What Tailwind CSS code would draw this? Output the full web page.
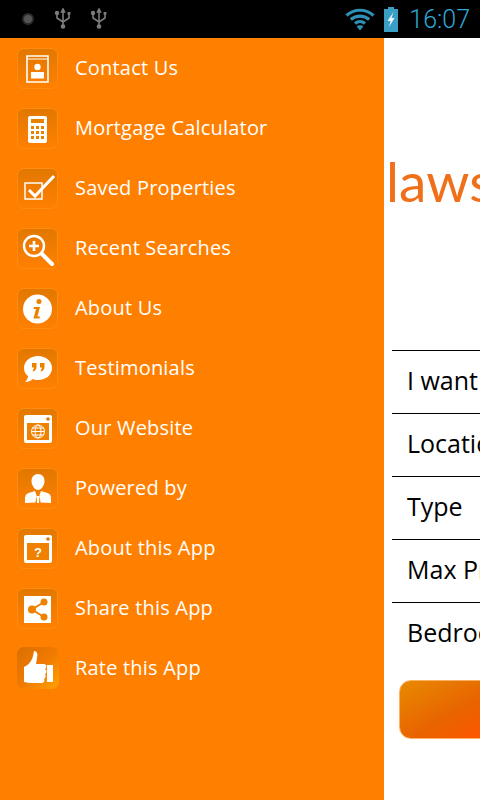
<!DOCTYPE html>
<html lang="en">
<head>
<meta charset="UTF-8">
<meta name="viewport" content="width=device-width, initial-scale=1.0">
<title>Property search</title>
<script src="https://cdn.jsdelivr.net/npm/@tailwindcss/browser@4"></script>
</head>
<body class="w-[480px] h-[800px] overflow-hidden bg-white font-['Open_Sans',sans-serif]">
  <!-- status bar -->
  <div class="h-[38px] bg-black flex items-center">
    <div class="w-[12px] h-[12px] ml-[22px] rounded-full bg-[#555] border-2 border-[#2c2c2c]"></div>
    <svg class="ml-[20px]" width="18" height="22" viewBox="0 0 18 22" fill="none" stroke="#7c7c7c" stroke-width="1.6"><path d="M9 1v17M3 6v4l6 4 6-4V6"/><path d="M9 1 7.5 4h3z" fill="#7c7c7c"/><circle cx="3" cy="5" r="1.4" fill="#7c7c7c"/><rect x="13.6" y="4" width="2.8" height="2.8" fill="#7c7c7c" stroke="none"/><circle cx="9" cy="18.5" r="2.3" fill="#7c7c7c" stroke="none"/></svg>
    <svg class="ml-[18px]" width="18" height="22" viewBox="0 0 18 22" fill="none" stroke="#7c7c7c" stroke-width="1.6"><path d="M9 1v17M3 6v4l6 4 6-4V6"/><path d="M9 1 7.5 4h3z" fill="#7c7c7c"/><circle cx="3" cy="5" r="1.4" fill="#7c7c7c"/><rect x="13.6" y="4" width="2.8" height="2.8" fill="#7c7c7c" stroke="none"/><circle cx="9" cy="18.5" r="2.3" fill="#7c7c7c" stroke="none"/></svg>
    <svg class="ml-auto" width="30" height="24" viewBox="0 0 30 24" fill="none" stroke="#2f8fb5" stroke-width="3.2"><path d="M1.5 8.5C9 1.5 21 1.5 28.5 8.5"/><path d="M5.8 12.5c5.2-4.6 13.200-4.600 18.400 0"/><path d="M10 16.500c3-2.500 7-2.500 10 0"/><path d="M15 23.500l-3.500-4.200c2-1.300 5-1.300 7 0z" fill="#2f8fb5" stroke="none"/></svg>
    <svg class="ml-[8px]" width="16" height="26" viewBox="0 0 16 26"><path d="M5 1h6v2h4v23H1V3h4z" fill="#3a9fc5"/><path d="M10.500 6 4.500 15h3l-1.500 6 5.500-9h-3z" fill="#e8f6fb"/></svg>
    <span class="ml-[10px] mr-[10px] text-[25px] leading-none font-['Roboto',sans-serif] font-light text-[#2ea8dc]">16:07</span>
  </div>

  <div class="flex h-[762px]">
    <!-- drawer -->
    <nav class="w-[384px] shrink-0 bg-[#ff8000] text-white text-[20px] tracking-[0.2px]">
      <a class="h-[60px] flex items-center pl-[17px] gap-[17px]">
        <span class="w-[41px] h-[41px] rounded-[7px] border border-[#ff8c10] bg-gradient-to-b from-[#e27800] to-[#ff8000]">
          <svg width="39" height="39" viewBox="0 0 39 39"><path d="M9 7h21v26H9z" fill="none" stroke="#fff" stroke-width="1.600"/><path d="M10 10h19" stroke="#fff"/><circle cx="19.500" cy="18" r="3.200" fill="#fff"/><rect x="13" y="23" width="13" height="6.500" fill="#fff"/></svg>
        </span>
        <span>Contact Us</span>
      </a>
      <a class="h-[60px] flex items-center pl-[17px] gap-[17px]">
        <span class="w-[41px] h-[41px] rounded-[7px] border border-[#ff8c10] bg-gradient-to-b from-[#e27800] to-[#ff8000]">
          <svg width="39" height="39" viewBox="0 0 39 39"><rect x="10" y="7" width="19" height="27" rx="2" fill="#fff"/><rect x="13" y="10" width="13" height="4" fill="#e88000"/><g fill="#e88000"><rect x="13" y="17" width="3" height="3"/><rect x="18" y="17" width="3" height="3"/><rect x="23" y="17" width="3" height="3"/><rect x="13" y="22" width="3" height="3"/><rect x="18" y="22" width="3" height="3"/><rect x="23" y="22" width="3" height="3"/><rect x="13" y="27" width="3" height="3"/><rect x="18" y="27" width="3" height="3"/><rect x="23" y="27" width="3" height="3"/></g></svg>
        </span>
        <span>Mortgage Calculator</span>
      </a>
      <a class="h-[60px] flex items-center pl-[17px] gap-[17px]">
        <span class="w-[41px] h-[41px] rounded-[7px] border border-[#ff8c10] bg-gradient-to-b from-[#e27800] to-[#ff8000]">
          <svg width="39" height="39" viewBox="0 0 39 39" fill="none" stroke="#fff"><rect x="7" y="14" width="17" height="16" stroke-width="1.500"/><path d="M11 21l6 6L36 7" stroke-width="3"/></svg>
        </span>
        <span>Saved Properties</span>
      </a>
      <a class="h-[60px] flex items-center pl-[17px] gap-[17px]">
        <span class="w-[41px] h-[41px] rounded-[7px] border border-[#ff8c10] bg-gradient-to-b from-[#e27800] to-[#ff8000]">
          <svg width="39" height="39" viewBox="0 0 39 39" fill="none" stroke="#fff"><circle cx="16" cy="17" r="10" stroke-width="2.400"/><path d="M16 12v10M11 17h10" stroke-width="2.600"/><path d="M24 25l10 10" stroke-width="4" stroke-linecap="round"/></svg>
        </span>
        <span>Recent Searches</span>
      </a>
      <a class="h-[60px] flex items-center pl-[17px] gap-[17px]">
        <span class="w-[41px] h-[41px] rounded-[7px] border border-[#ff8c10] bg-gradient-to-b from-[#e27800] to-[#ff8000]">
          <svg width="39" height="39" viewBox="0 0 39 39"><circle cx="19.500" cy="20" r="14.500" fill="#fff"/><circle cx="21" cy="12.500" r="2.500" fill="#ee8000"/><path d="M16 18h6l-2.500 9.500h2.500l-.5 2h-6l2.500-9.500h-2.500z" fill="#ee8000"/></svg>
        </span>
        <span>About Us</span>
      </a>
      <a class="h-[60px] flex items-center pl-[17px] gap-[17px]">
        <span class="w-[41px] h-[41px] rounded-[7px] border border-[#ff8c10] bg-gradient-to-b from-[#e27800] to-[#ff8000]">
          <svg width="39" height="39" viewBox="0 0 39 39"><path d="M20 7c8 0 14 5 14 12s-6 12-14 12c-2 0-3 0-5-1-2 2-5 3-8 3 2-2 3-4 3-6-3-2-4-5-4-8C6 12 12 7 20 7z" fill="#fff"/><path d="M14 14h4.500v3.500c0 2.500-1 4-3 5l-1-1c1-1 1.500-2 1.500-3h-2zM22 14h4.500v3.500c0 2.500-1 4-3 5l-1-1c1-1 1.500-2 1.500-3h-2z" fill="#ee8000"/></svg>
        </span>
        <span>Testimonials</span>
      </a>
      <a class="h-[60px] flex items-center pl-[17px] gap-[17px]">
        <span class="w-[41px] h-[41px] rounded-[7px] border border-[#ff8c10] bg-gradient-to-b from-[#e27800] to-[#ff8000]">
          <svg width="39" height="39" viewBox="0 0 39 39"><rect x="6" y="6" width="28" height="28" rx="2" fill="#fff"/><circle cx="30" cy="10" r="1.800" fill="#e07600"/><rect x="9" y="14" width="22" height="17" fill="#f08000"/><g fill="none" stroke="#fff" stroke-width="1"><circle cx="20" cy="22.500" r="6.500"/><ellipse cx="20" cy="22.500" rx="3" ry="6.500"/><path d="M13.500 22.500h13M14.500 19h11M14.500 26h11"/></g></svg>
        </span>
        <span>Our Website</span>
      </a>
      <a class="h-[60px] flex items-center pl-[17px] gap-[17px]">
        <span class="w-[41px] h-[41px] rounded-[7px] border border-[#ff8c10] bg-gradient-to-b from-[#e27800] to-[#ff8000]">
          <svg width="39" height="39" viewBox="0 0 39 39" fill="#fff"><path d="M20 5c4 0 6.500 3 6.500 7 0 4-3 9-6.500 9s-6.500-5-6.500-9c0-4 2.500-7 6.500-7z"/><path d="M7 34v-5c0-3 2-5 5-5.500l5-1.500 1.500 4-1 7.500zM33 34v-5c0-3-2-5-5-5.500l-5-1.500-1.500 4 1 7.500zM19 34l-.500-7h3l-.500 7z"/></svg>
        </span>
        <span>Powered by</span>
      </a>
      <a class="h-[60px] flex items-center pl-[17px] gap-[17px]">
        <span class="w-[41px] h-[41px] rounded-[7px] border border-[#ff8c10] bg-gradient-to-b from-[#e27800] to-[#ff8000]">
          <svg width="39" height="39" viewBox="0 0 39 39"><rect x="6" y="6" width="28" height="28" rx="2" fill="#fff"/><circle cx="30" cy="10" r="1.800" fill="#e07600"/><rect x="9" y="14" width="22" height="17" fill="#f08000"/><text x="20" y="28" text-anchor="middle" font-family="Liberation Sans" font-weight="700" font-size="13" fill="#fff">?</text></svg>
        </span>
        <span>About this App</span>
      </a>
      <a class="h-[60px] flex items-center pl-[17px] gap-[17px]">
        <span class="w-[41px] h-[41px] rounded-[7px] border border-[#ff8c10] bg-gradient-to-b from-[#e27800] to-[#ff8000]">
          <svg width="39" height="39" viewBox="0 0 39 39"><rect x="6" y="7" width="27" height="27" fill="#fff"/><path d="M26 13 14 20.500 26 28" fill="none" stroke="#f08000" stroke-width="2"/><circle cx="26" cy="13" r="3.500" fill="#f08000"/><circle cx="14" cy="20.500" r="4" fill="#f08000"/><circle cx="26" cy="28" r="3.500" fill="#f08000"/></svg>
        </span>
        <span>Share this App</span>
      </a>
      <a class="h-[60px] flex items-center pl-[17px] gap-[16px]">
        <span class="w-[42px] h-[42px] rounded-[7px] bg-gradient-to-br from-[#d97000] via-[#f07a00] to-[#ffa000]">
          <svg width="42" height="42" viewBox="0 0 42 42" fill="#fff"><path d="M17 4c3 0 4 3 3 7l-1 6h8c3 0 3 4 1 5 2 1 2 4 0 5 1 1 1 4-1 5 1 2 0 4-3 4H13c-3 0-4-1-6-1V20c5-2 8-7 9-11z"/><rect x="30" y="18" width="6" height="17"/></svg>
        </span>
        <span>Rate this App</span>
      </a>
    </nav>

    <!-- main page, cut off by the drawer -->
    <main class="w-[480px] shrink-0 text-black">
      <div class="h-[312px] pt-[107px] pl-[2px] overflow-hidden">
        <span class="block text-[55px] leading-[72px] font-['Lato',sans-serif] text-[#f0701a] whitespace-nowrap">laws</span>
      </div>
      <div class="ml-[8px] border-t border-black h-[63px] flex items-center pb-[2px] pl-[15px] text-[25px]">I want to</div>
      <div class="ml-[8px] border-t border-black h-[63px] flex items-center pb-[2px] pl-[15px] text-[25px]">Location</div>
      <div class="ml-[8px] border-t border-black h-[63px] flex items-center pb-[2px] pl-[15px] text-[25px]">Type</div>
      <div class="ml-[8px] border-t border-black h-[63px] flex items-center pb-[2px] pl-[15px] text-[25px]">Max Price</div>
      <div class="ml-[8px] border-t border-black h-[63px] flex items-center pb-[2px] pl-[15px] text-[25px]">Bedrooms</div>
      <div class="mt-[15px] ml-[15px] w-[120px] h-[59px] rounded-[12px] border border-[#ffb060] bg-[linear-gradient(150deg,#e88a00_0%,#e86400_50%,#ff5500_85%)]"></div>
    </main>
  </div>
</body>
</html>
